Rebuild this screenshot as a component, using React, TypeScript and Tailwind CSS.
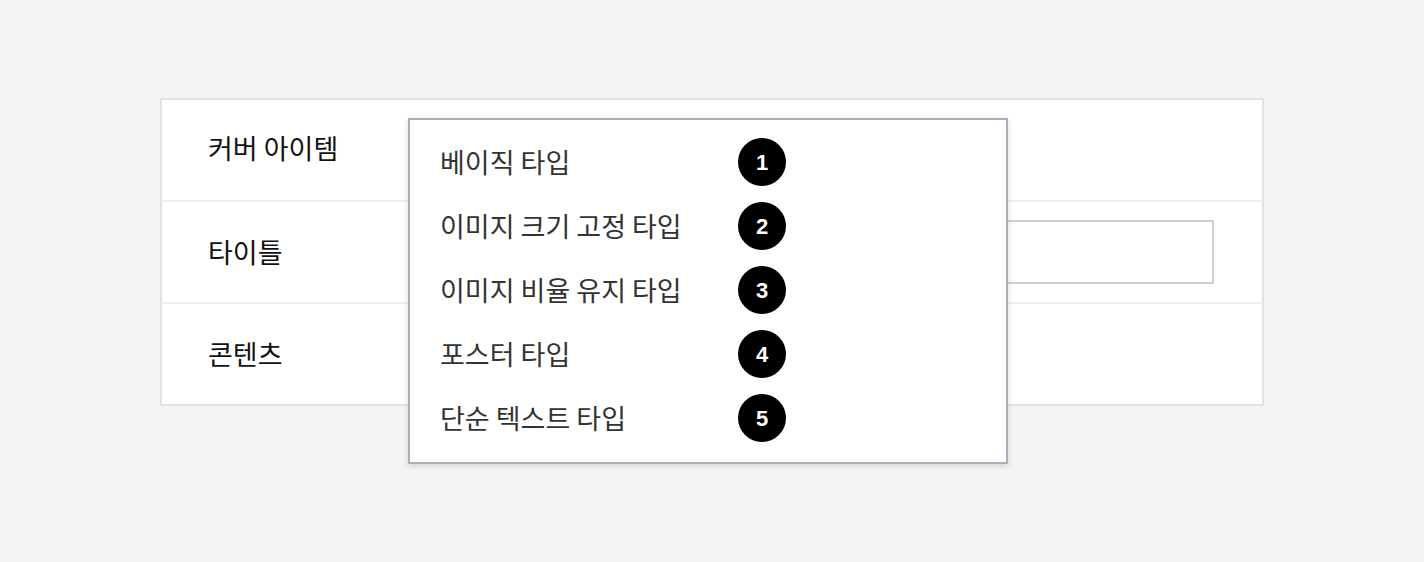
import React from "react";

const OPTIONS = [
    "베이직 타입",
    "이미지 크기 고정 타입",
    "이미지 비율 유지 타입",
    "포스터 타입",
    "단순 텍스트 타입",
];

const KR = "font-['Noto_Sans_CJK_KR','Noto_Sans',sans-serif]";

// ── Dropdown list ─────────────────────────────────────────────────────────────
function TypeMenu() {
    return (
        <div className="absolute left-[246px] top-[18px] z-10 w-[600px] border-2 border-[#a7afba] bg-white pt-[10px] pb-[12px] shadow-[0_2px_6px_rgba(0,0,0,0.14)]">
            {OPTIONS.map((label, i) => (
                <div key={label} className="flex h-16 items-center pl-[30px]">
                    <span className={`w-[298px] text-[27px] text-[#333] ${KR}`}>{label}</span>
                    <span className="flex h-12 w-12 items-center justify-center rounded-full bg-black font-['Liberation_Sans',sans-serif] text-[22px] font-bold text-white">
                        {i + 1}
                    </span>
                </div>
            ))}
        </div>
    );
}

export default function App() {
    return (
        <div className="min-h-[562px] bg-[#f4f4f4] px-[160px] pt-[98px]">
            <div className="border-2 border-[#e2e2e2] bg-white">
                {/* 커버 아이템 */}
                <div className="relative flex h-[100px] items-center pl-[46px]">
                    <span className={`-mt-1 text-[27px] text-[#111] ${KR}`}>커버 아이템</span>
                    <TypeMenu />
                </div>

                {/* 타이틀 */}
                <div className="flex h-[102px] items-center border-t-2 border-[#eef0f3] pl-[46px] pr-[48px]">
                    <span className={`w-[200px] text-[27px] text-[#111] ${KR}`}>타이틀</span>
                    <div className="h-16 flex-1 border-2 border-[#c8d0d9]" />
                </div>

                {/* 콘텐츠 */}
                <div className="flex h-[102px] items-center border-t-2 border-[#eef0f3] pl-[46px]">
                    <span className={`text-[27px] text-[#111] ${KR}`}>콘텐츠</span>
                </div>
            </div>
        </div>
    );
}
